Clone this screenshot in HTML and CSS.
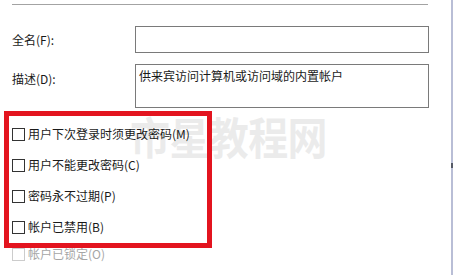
FILE: index.html
```html
<!DOCTYPE html>
<html lang="zh-CN">
<head>
<meta charset="utf-8">
<link rel="stylesheet" href="styles.css">
</head>
<body>
<div class="window">
  <div class="content">
    <div class="sep"></div>
    <div class="fields">
      <label class="lbl">全名(F):</label>
      <div class="field"></div>
      <label class="lbl lbl-top">描述(D):</label>
      <div class="field area">供来宾访问计算机或访问域的内置帐户</div>
    </div>
    <div class="options">
      <div class="highlight">
        <div class="opt"><span class="box"></span>用户下次登录时须更改密码(M)</div>
        <div class="opt"><span class="box"></span>用户不能更改密码(C)</div>
        <div class="opt"><span class="box"></span>密码永不过期(P)</div>
        <div class="opt"><span class="box"></span>帐户已禁用(B)</div>
      </div>
      <div class="opt disabled"><span class="box"></span>帐户已锁定(O)</div>
    </div>
    <div class="watermark">市星教程网</div>
  </div>
  <div class="edge"><span class="tick"></span></div>
</div>
</body>
</html>
```
FILE: styles.css
```css
html, body {
  margin: 0;
  padding: 0;
  background: #ffffff;
}
body {
  width: 453px;
  height: 275px;
  overflow: hidden;
  font-family: "Noto Sans CJK SC", "Microsoft YaHei", sans-serif;
  font-size: 12px;
  color: #1a1a1a;
}
.window {
  display: flex;
  height: 275px;
}
.content {
  position: relative;
  width: 451px;
  padding-top: 4px;
  box-sizing: border-box;
}
.sep {
  margin-left: 12px;
  width: 416px;
  height: 1px;
  background: #a3a3a3;
}
.fields {
  display: grid;
  grid-template-columns: 123px 294px;
  row-gap: 11px;
  margin-top: 21px;
  padding-left: 12px;
}
.lbl {
  align-self: center;
  line-height: 16px;
}
.lbl-top {
  align-self: start;
  padding-top: 7px;
}
.field {
  box-sizing: border-box;
  height: 27px;
  border: 1px solid #7a7a7a;
  background: #fff;
}
.area {
  height: 44px;
  padding: 3px 0 0 3px;
  line-height: 16px;
}
.options {
  margin-top: 3px;
}
.highlight {
  position: relative;
  z-index: 2;
  margin-left: 4px;
  width: 208px;
  box-sizing: border-box;
  border: 5px solid #e3141f;
  padding: 2px 0 1px 3px;
}
.opt {
  display: flex;
  align-items: center;
  height: 31px;
  line-height: 16px;
}
.box {
  width: 13px;
  height: 13px;
  box-sizing: border-box;
  border: 1px solid #333333;
  margin-right: 3px;
  margin-top: 1px;
  background: #fff;
}
.disabled {
  height: 12px;
  padding-left: 12px;
  color: #a6a6a6;
}
.disabled .box {
  border-color: #cccccc;
}
.watermark {
  position: absolute;
  z-index: 1;
  left: 130px;
  top: 114px;
  font-size: 40px;
  line-height: 1;
  letter-spacing: -0.6px;
  font-weight: 700;
  color: rgba(226, 226, 226, 0.66);
  white-space: nowrap;
  transform: scaleY(1.12);
  transform-origin: left top;
}
.edge {
  position: relative;
  width: 2px;
  height: 275px;
  background: #b9bed6;
}
.tick {
  position: absolute;
  left: 0;
  top: 163px;
  width: 2px;
  height: 5px;
  background: #555a66;
}
```
